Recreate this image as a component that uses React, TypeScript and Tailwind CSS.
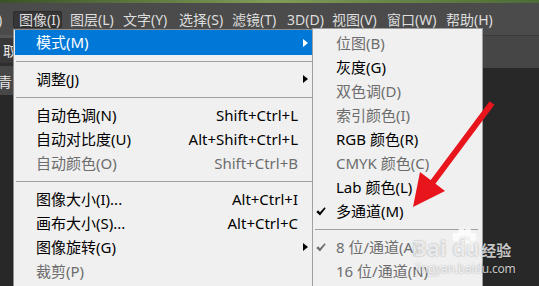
import React from "react";

const menuBar = [
    { label: "图层(L)", w: "w-[53px]" },
    { label: "文字(Y)", w: "w-[56px]" },
    { label: "选择(S)", w: "w-[53px]" },
    { label: "滤镜(T)", w: "w-[55px]" },
    { label: "3D(D)", w: "w-[45px]" },
    { label: "视图(V)", w: "w-[55px]" },
    { label: "窗口(W)", w: "w-[59px]" },
    { label: "帮助(H)", w: "w-[60px]" },
];

type Item =
    | { sep: true }
    | { sep?: false; label: string; shortcut?: string; arrow?: boolean; disabled?: boolean; active?: boolean; checked?: boolean };

const mainItems: Item[] = [
    { label: "模式(M)", arrow: true, active: true },
    { sep: true },
    { label: "调整(J)", arrow: true },
    { sep: true },
    { label: "自动色调(N)", shortcut: "Shift+Ctrl+L" },
    { label: "自动对比度(U)", shortcut: "Alt+Shift+Ctrl+L" },
    { label: "自动颜色(O)", shortcut: "Shift+Ctrl+B", disabled: true },
    { sep: true },
    { label: "图像大小(I)...", shortcut: "Alt+Ctrl+I" },
    { label: "画布大小(S)...", shortcut: "Alt+Ctrl+C" },
    { label: "图像旋转(G)", arrow: true },
    { label: "裁剪(P)", disabled: true },
];

const subItems: Item[] = [
    { label: "位图(B)", disabled: true },
    { label: "灰度(G)" },
    { label: "双色调(D)", disabled: true },
    { label: "索引颜色(I)", disabled: true },
    { label: "RGB 颜色(R)" },
    { label: "CMYK 颜色(C)", disabled: true },
    { label: "Lab 颜色(L)" },
    { label: "多通道(M)", checked: true },
    { sep: true },
    { label: "8 位/通道(A)", disabled: true, checked: true },
    { label: "16 位/通道(N)", disabled: true },
];

const Check = ({ color }: { color: string }) => (
    <svg width="10" height="9" viewBox="0 0 10 9">
        <path d="M0.3 5 L2.2 3.3 L3.9 5.2 L8.6 0.2 L9.7 1.3 L4 8.6 Z" fill={color} />
    </svg>
);

export default function App() {
    return (
        <div className="relative w-[539px] h-[286px] overflow-hidden bg-[#282828] font-['Noto_Sans','Noto_Sans_CJK_SC',sans-serif]">
            {/* photo strip above the window */}
            <div className="h-[3px] bg-gradient-to-r from-[#3b5228] via-[#7f9c57] to-[#4d6b36]" />

            {/* menu bar */}
            <div className="h-[32px] bg-[#4b4b4b] flex items-start pt-[8px] text-[14px] leading-[17px] text-[#dedede]">
                <span className="w-[13px] overflow-hidden">
                    <span className="block -ml-[2px]">)</span>
                </span>
                <span className="w-[49px] h-[17px] pl-[5px] bg-[#363636] border border-[#2c2c2c] rounded-[2px] leading-[15px]">
                    图像(I)
                </span>
                {menuBar.map(m => (
                    <span key={m.label} className={`${m.w} pl-[8px] whitespace-nowrap`}>
                        {m.label}
                    </span>
                ))}
            </div>

            {/* panels under the menu bar */}
            <div className="flex">
                <div className="w-[13px] flex flex-col overflow-hidden text-[14px] text-[#e6e6e6]">
                    <div className="h-[3px] bg-[#555555]" />
                    <div className="h-[25px] bg-[#383838] pl-[3px] leading-[25px]">取</div>
                    <div className="h-[3px] bg-[#2e2e2e]" />
                    <div className="h-[29px] bg-[#474747] -ml-[2px] leading-[32px]">青</div>
                </div>
                <div className="flex-1">
                    <div className="h-[33px] bg-[#464646] border-t border-[#393939]" />
                </div>
            </div>

            {/* 图像 menu */}
            <div className="absolute left-[13px] top-[29px] w-[303px] h-[270px] bg-[#f0f0f0] border border-[#8f8f8f] px-[1px] text-[15px]">
                {mainItems.map((it, i) =>
                    it.sep ? (
                        <div key={i} className="h-[12px] flex items-center pl-[1px]">
                            <div className="h-px w-full bg-[#a0a0a0]" />
                        </div>
                    ) : (
                        <div
                            key={i}
                            className={`flex items-center pl-[21px] whitespace-nowrap ${i === 0 ? "h-[25px]" : "h-[24px]"} ${
                                it.active ? "bg-[#0078d7] text-white" : it.disabled ? "text-[#6d6d6d]" : "text-black"
                            }`}
                        >
                            <span className="flex-1">{it.label}</span>
                            {it.shortcut && <span>{it.shortcut}</span>}
                            <span className="w-[16px] pl-[5px]">
                                {it.arrow && (
                                    <span
                                        className={`block w-0 h-0 border-y-[4.5px] border-y-transparent border-l-[5px] ${
                                            it.active ? "border-l-white" : "border-l-black"
                                        }`}
                                    />
                                )}
                            </span>
                        </div>
                    )
                )}
            </div>

            {/* 模式 submenu */}
            <div className="absolute left-[312px] top-[28px] w-[171px] h-[270px] bg-[#f0f0f0] border border-[#a0a0a0] pt-[2px] text-[15px]">
                {subItems.map((it, i) =>
                    it.sep ? (
                        <div key={i} className="h-[12px] flex items-center ml-[2px] mr-[4px]">
                            <div className="h-px w-full bg-[#a0a0a0]" />
                        </div>
                    ) : (
                        <div
                            key={i}
                            className={`h-[24px] flex items-center whitespace-nowrap ${it.disabled ? "text-[#6d6d6d]" : "text-black"}`}
                        >
                            <span className="w-[23px] pl-[3px] flex items-center">
                                {it.checked && <Check color={it.disabled ? "#6f6f6f" : "#000000"} />}
                            </span>
                            <span>{it.label}</span>
                        </div>
                    )
                )}
            </div>

            {/* red annotation arrow */}
            <svg className="absolute left-0 top-0 pointer-events-none" width="539" height="286" viewBox="0 0 539 286">
                <line x1="492" y1="103" x2="430" y2="186" stroke="#e8151d" strokeWidth="6" />
                <polygon points="413,207 420,172 445,191" fill="#e8151d" />
            </svg>

            {/* watermark */}
            <div className="absolute left-[412px] top-[226px] w-[110px] h-[60px] text-white/75 [text-shadow:0_0_2px_rgba(0,0,0,0.35)] pointer-events-none">
                <svg className="absolute left-[38px] top-[2px] opacity-80" width="28" height="26" viewBox="0 0 28 26">
                    <ellipse cx="6" cy="9" rx="3.5" ry="4.2" fill="#ffffff" />
                    <ellipse cx="11.5" cy="4.5" rx="3.5" ry="4.2" fill="#ffffff" />
                    <ellipse cx="18" cy="4.5" rx="3.5" ry="4.2" fill="#ffffff" />
                    <ellipse cx="23" cy="9" rx="3.5" ry="4.2" fill="#ffffff" />
                    <path d="M14.5 12 C9 12 5 18 6.5 22 C8 25 12 23.5 14.5 23.5 C17 23.5 21 25 22.5 22 C24 18 20 12 14.5 12 Z" fill="#ffffff" />
                </svg>
                <div className="absolute left-0 top-[10px] flex items-baseline leading-none">
                    <span className="text-[22px] font-bold">Bai</span>
                    <span className="text-[21px] font-bold ml-[6px]">du</span>
                    <span className="text-[15px] font-bold ml-[2px]">经验</span>
                </div>
                <div className="absolute left-[3px] top-[37px] text-[12px] leading-none tracking-[-0.2px]">jingyan.baidu.com</div>
            </div>
        </div>
    );
}
